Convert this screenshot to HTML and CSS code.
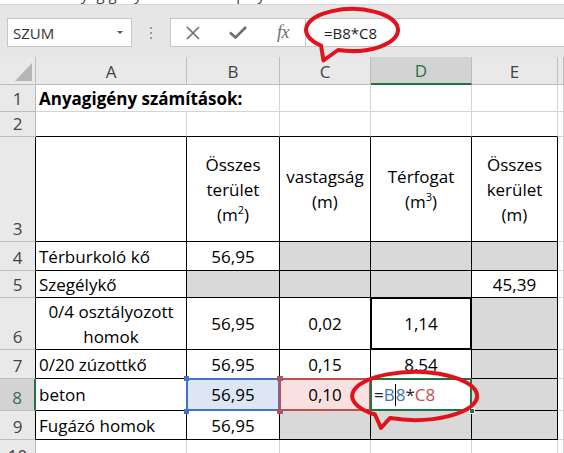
FILE: index.html
```html
<!DOCTYPE html>
<html lang="hu">
<head>
<meta charset="utf-8">
<title>Anyagigény</title>
<link rel="stylesheet" href="styles.css">
</head>
<body>
<div class="titlestrip"><span>Anyagigény számítások - pályázat - Excel</span></div>
<div class="fbar">
  <div class="namebox"><span>SZUM</span><i class="drop"></i></div>
  <div class="dots"><i></i><i></i><i></i></div>
  <div class="fbox">
    <div class="ficons">
      <span class="slot s1"><svg width="14" height="14" viewBox="0 0 14 14"><path d="M1 1L13 13M13 1L1 13" stroke="#6e6e6e" stroke-width="1.7" fill="none"/></svg></span>
      <span class="slot s2"><svg width="18" height="13" viewBox="0 0 18 13"><path d="M1 6.5L6.5 11.5L17 1" stroke="#6e6e6e" stroke-width="2.6" fill="none"/></svg></span>
      <span class="slot s3 fx">fx</span>
    </div>
    <div class="finput">=B8*C8</div>
  </div>
</div>

<div class="sheet">
  <div class="hd corner"><i class="tri"></i></div>
  <div class="hd ch">A</div>
  <div class="hd ch">B</div>
  <div class="hd ch">C</div>
  <div class="hd ch sel">D</div>
  <div class="hd ch">E</div>
  <div class="hd ch"></div>

  <div class="hd rh">1</div>
  <div class="c l b span2">Anyagigény számítások:</div>
  <div class="c"></div>
  <div class="c"></div>
  <div class="c"></div>
  <div class="c"></div>

  <div class="hd rh">2</div>
  <div class="c bb"></div>
  <div class="c bb"></div>
  <div class="c bb"></div>
  <div class="c bb"></div>
  <div class="c bb"></div>
  <div class="c"></div>

  <div class="hd rh tb">3</div>
  <div class="c t"></div>
  <div class="c t"><span class="v">Összes<br>terület<br>(m<sup>2</sup>)</span></div>
  <div class="c t"><span class="v">vastagság<br>(m)</span></div>
  <div class="c t"><span class="v">Térfogat<br>(m<sup>3</sup>)</span></div>
  <div class="c t"><span class="v">Összes<br>kerület<br>(m)</span></div>
  <div class="c"></div>

  <div class="hd rh tb">4</div>
  <div class="c t l">Térburkoló kő</div>
  <div class="c t">56,95</div>
  <div class="c t g"></div>
  <div class="c t g"></div>
  <div class="c t g"></div>
  <div class="c"></div>

  <div class="hd rh tb">5</div>
  <div class="c t l">Szegélykő</div>
  <div class="c t g"></div>
  <div class="c t g"></div>
  <div class="c t g"></div>
  <div class="c t">45,39</div>
  <div class="c"></div>

  <div class="hd rh tb">6</div>
  <div class="c t"><span class="v">0/4 osztályozott<br>homok</span></div>
  <div class="c t">56,95</div>
  <div class="c t">0,02</div>
  <div class="c t thick">1,14</div>
  <div class="c t g"></div>
  <div class="c"></div>

  <div class="hd rh tb">7</div>
  <div class="c t l">0/20 zúzottkő</div>
  <div class="c t">56,95</div>
  <div class="c t">0,15</div>
  <div class="c t">8,54</div>
  <div class="c t g"></div>
  <div class="c"></div>

  <div class="hd rh tb rsel">8</div>
  <div class="c t l">beton</div>
  <div class="c t selb">56,95<i class="h tl"></i><i class="h tr"></i><i class="h bl"></i><i class="h br"></i></div>
  <div class="c t selr">0,10<i class="h tl"></i><i class="h bl"></i></div>
  <div class="c t l active"><span class="eq">=</span><span class="rb">B</span><span class="cur"></span><span class="rb">8</span><span class="eq">*</span><span class="rr">C8</span><i class="fill"></i></div>
  <div class="c t g"></div>
  <div class="c"></div>

  <div class="hd rh tb">9</div>
  <div class="c t l">Fugázó homok</div>
  <div class="c t">56,95</div>
  <div class="c t g"></div>
  <div class="c t g"></div>
  <div class="c t g"></div>
  <div class="c"></div>

  <div class="hd rh">10</div>
  <div class="c"></div>
  <div class="c"></div>
  <div class="c"></div>
  <div class="c"></div>
  <div class="c"></div>
  <div class="c"></div>
</div>

<svg class="marks" width="564" height="453" viewBox="0 0 564 453">
  <path d="M338 50 A46 21 0 1 0 321 45.5 L323.5 60.5 Z" fill="none" stroke="#e2121c" stroke-width="4" stroke-linejoin="round"/>
  <path d="M390 418 A62.5 24 0 1 0 375 414.5 L381 428 Z" fill="none" stroke="#e2121c" stroke-width="4" stroke-linejoin="round"/>
</svg>
</body>
</html>
```
FILE: styles.css
```css
* { box-sizing: border-box; margin: 0; padding: 0; }
html, body { width: 564px; height: 453px; overflow: hidden; }
body { position: relative; background: #fff; font-family: "Open Sans", "Noto Sans", sans-serif; color: #000; }

.titlestrip { height: 5px; overflow: hidden; background: #fff; border-bottom: 1px solid #d6d6d6; }
.titlestrip span { display: block; font-size: 15px; line-height: 15px; margin-top: -13px; padding-left: 62px; color: #444; white-space: nowrap; }

.fbar { height: 52px; background: #e6e6e6; display: flex; align-items: flex-start; padding: 13px 0 0 7px; }
.namebox { width: 125px; height: 29px; background: #fff; border: 1px solid #c6c6c6; display: flex; align-items: center; padding-left: 5px; font-size: 15px; color: #333; }
.drop { margin-left: auto; margin-right: 8px; width: 0; height: 0; border-left: 3px solid transparent; border-right: 3px solid transparent; border-top: 3px solid #555; }
.dots { display: flex; flex-direction: column; gap: 3px; margin: 9px 0 0 18px; }
.dots i { display: block; width: 2px; height: 2px; background: #9a9a9a; }
.fbox { flex: 1; margin-left: 18px; margin-right: -2px; height: 29px; background: #fff; border: 1px solid #c6c6c6; display: flex; }
.ficons { width: 134px; display: flex; align-items: center; }
.slot { display: flex; align-items: center; justify-content: center; height: 27px; }
.s1 { width: 44px; }
.s2 { width: 46px; }
.s3 { width: 44px; }
.fx { font-family: "Liberation Serif", serif; font-style: italic; font-size: 18px; color: #6e6e6e; letter-spacing: -0.5px; }
.finput { flex: 1; border-left: 1px solid #c6c6c6; padding-left: 18px; font-size: 15px; display: flex; align-items: center; color: #222; }

.sheet { display: grid; grid-template-columns: 36px 151px 93px 91px 101px 86px 1fr; grid-template-rows: 28px 27px 25px 105px 29px 27px 52px 29px 32px 29px 29px; }
.hd { background: #e9e9e9; border-right: 1px solid #bdbdbd; border-bottom: 1px solid #bdbdbd; color: #444; font-size: 17px; display: flex; justify-content: center; align-items: center; }
.corner { position: relative; }
.tri { position: absolute; right: 3px; bottom: 3px; width: 0; height: 0; border-left: 17px solid transparent; border-bottom: 18px solid #b5b5b5; }
.ch { padding-top: 1px; }
.sel { background: #d3d3d3; color: #217346; border-bottom: 2px solid #217346; }
.rh { align-items: flex-end; padding-bottom: 1px; line-height: 23px; }
.tb { border-right-color: #000; }
.rsel { background: #d3d3d3; color: #3a6e50; border-right: 2px solid #217346; }

.c { border-right: 1px solid #d4d4d4; border-bottom: 1px solid #d4d4d4; display: flex; align-items: center; justify-content: center; text-align: center; font-size: 17px; line-height: 25px; position: relative; white-space: nowrap; }
.v { display: block; }
.c sup { font-size: 11px; line-height: 0; vertical-align: 7px; }
.l { justify-content: flex-start; padding-left: 3px; text-align: left; }
.b { font-weight: 700; }
.span2 { grid-column: span 2; }
.t { border-color: #000; }
.bb { border-bottom-color: #000; }
.g { background: #d9d9d9; }

.thick::after { content: ""; position: absolute; left: -1px; top: -1px; right: -1px; bottom: -1px; border: 2px solid #000; z-index: 2; }

.selb { background: #dde6f4; }
.selb::after { content: ""; position: absolute; left: -1px; top: -1px; right: -1px; bottom: -1px; border: 2px solid #4472c4; z-index: 2; }
.selr { background: #f9e1e1; }
.selr::after { content: ""; position: absolute; left: -1px; top: -1px; right: -1px; bottom: -1px; border: 2px solid #c0504d; z-index: 2; }
.h { position: absolute; width: 5px; height: 5px; z-index: 3; }
.selb .h { background: #4472c4; }
.selr .h { background: #c0504d; }
.h.tl { left: -3px; top: -3px; }
.h.tr { right: -4px; top: -3px; }
.h.bl { left: -3px; bottom: -4px; }
.h.br { right: -4px; bottom: -4px; }

.active { background: #fff; padding-left: 3px; }
.active::after { content: ""; position: absolute; left: -1px; top: -1px; right: -1px; bottom: -1px; border: 2px solid #217346; z-index: 4; }
.fill { position: absolute; right: -4px; bottom: -4px; width: 6px; height: 6px; background: #217346; border: 1px solid #fff; z-index: 5; }
.eq { color: #222; }
.rb { color: #4472c4; }
.rr { color: #c0504d; }
.cur { display: inline-block; width: 1px; height: 22px; background: #000; }

.marks { position: absolute; left: 0; top: 0; z-index: 10; pointer-events: none; }
```
